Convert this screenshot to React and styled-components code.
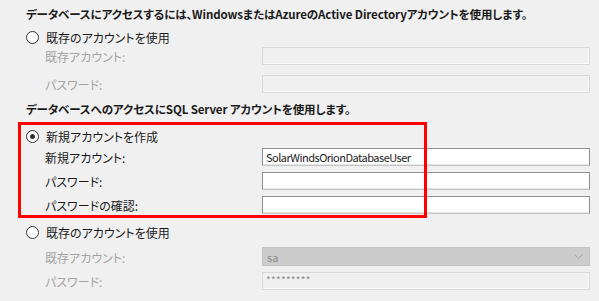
import React from 'react';
import styled, { createGlobalStyle } from 'styled-components';

// Базові стилі сторінки
const GlobalStyle = createGlobalStyle`
  html, body {
    margin: 0;
    padding: 0;
    background: #f0f0f0;
  }
  body {
    font-family: "Noto Sans CJK JP", "Noto Sans", sans-serif;
    font-feature-settings: "palt";
    color: #1a1a1a;
  }
`;

const Page = styled.div`
  position: relative;
  width: 599px;
  height: 301px;
  padding: 5px 9px 0 26px;
  box-sizing: border-box;
  display: flex;
  flex-direction: column;
`;

const Heading = styled.div`
  height: 18px;
  line-height: 18px;
  font-size: 11.5px;
  letter-spacing: -0.1px;
  font-weight: 700;
  white-space: nowrap;
  margin-top: ${(p) => p.$mt || 0}px;
`;

const RadioRow = styled.label`
  display: flex;
  align-items: center;
  gap: 7px;
  height: 20px;
  font-size: 12px;
  margin-top: ${(p) => p.$mt || 0}px;
`;

const RadioDot = styled.span`
  width: 11px;
  height: 11px;
  border: 1px solid #333;
  border-radius: 50%;
  background: #fff;
  display: flex;
  align-items: center;
  justify-content: center;
  flex-shrink: 0;

  &::after {
    content: '';
    width: 5px;
    height: 5px;
    border-radius: 50%;
    background: ${(p) => (p.$checked ? '#333' : 'transparent')};
  }
`;

const FieldRow = styled.div`
  display: flex;
  align-items: center;
  height: ${(p) => p.$h || 18}px;
  margin-top: ${(p) => p.$mt || 0}px;
  padding-left: 19px;
`;

const Label = styled.span`
  width: 217px;
  font-size: 12px;
  padding-top: 1px;
  color: ${(p) => (p.$disabled ? '#a3a3a3' : '#1a1a1a')};
`;

const Input = styled.div`
  flex: 1;
  height: 100%;
  box-sizing: border-box;
  display: flex;
  align-items: center;
  padding-left: 3px;
  font-size: 11px;
  letter-spacing: -0.5px;
  background: ${(p) => (p.$disabled ? '#f0f0f0' : '#fff')};
  border: 1px solid ${(p) => (p.$disabled ? '#d9d9d9' : '#8f8f8f')};
  border-bottom-color: ${(p) => (p.$disabled ? '#d9d9d9' : '#c4c4c4')};
  box-shadow: ${(p) =>
    p.$disabled ? 'inset -1px -1px 0 #fafafa' : 'inset 0 -1px 0 #e6e6e6'};
  color: ${(p) => (p.$disabled ? '#8c8c8c' : '#222')};
`;

const Masked = styled.span`
  font-size: 10px;
  letter-spacing: 0.3px;
  margin-top: -3px;
`;

const Select = styled.div`
  flex: 1;
  height: 100%;
  box-sizing: border-box;
  display: flex;
  align-items: center;
  justify-content: space-between;
  padding: 0 6px 0 4px;
  font-size: 11px;
  background: #cccccc;
  border: 1px solid #c4c4c4;
  color: #8a8a8a;
`;

// Червона рамка-виділення поверх форми
const Highlight = styled.div`
  position: absolute;
  left: 18px;
  top: 122px;
  width: 409px;
  height: 96px;
  box-sizing: border-box;
  border: 3px solid #ff0000;
  pointer-events: none;
`;

const Chevron = () => (
  <svg width="9" height="5" viewBox="0 0 9 5">
    <path d="M0.5 0.5 L4.5 4.3 L8.5 0.5" fill="none" stroke="#a6a6a6" strokeWidth="1" />
  </svg>
);

const App = () => {
  return (
    <>
      <GlobalStyle />
      <Page>
        <Heading>
          データベースにアクセスするには、WindowsまたはAzureのActive Directoryアカウントを使用します。
        </Heading>
        <RadioRow $mt={4}>
          <RadioDot />
          既存のアカウントを使用
        </RadioRow>
        <FieldRow>
          <Label $disabled>既存アカウント:</Label>
          <Input $disabled />
        </FieldRow>
        <FieldRow $mt={10}>
          <Label $disabled>パスワード:</Label>
          <Input $disabled />
        </FieldRow>

        <Heading $mt={7}>データベースへのアクセスにSQL Server アカウントを使用します。</Heading>
        <RadioRow $mt={8}>
          <RadioDot $checked />
          新規アカウントを作成
        </RadioRow>
        <FieldRow $mt={2}>
          <Label>新規アカウント:</Label>
          <Input>SolarWindsOrionDatabaseUser</Input>
        </FieldRow>
        <FieldRow $mt={6}>
          <Label>パスワード:</Label>
          <Input />
        </FieldRow>
        <FieldRow $mt={6}>
          <Label>パスワードの確認:</Label>
          <Input />
        </FieldRow>

        <RadioRow $mt={8}>
          <RadioDot />
          既存のアカウントを使用
        </RadioRow>
        <FieldRow $mt={5} $h={19}>
          <Label $disabled>既存アカウント:</Label>
          <Select>
            sa
            <Chevron />
          </Select>
        </FieldRow>
        <FieldRow $mt={6}>
          <Label $disabled>パスワード:</Label>
          <Input $disabled>
            <Masked>*********</Masked>
          </Input>
        </FieldRow>
        <Highlight />
      </Page>
    </>
  );
};

export default App;
